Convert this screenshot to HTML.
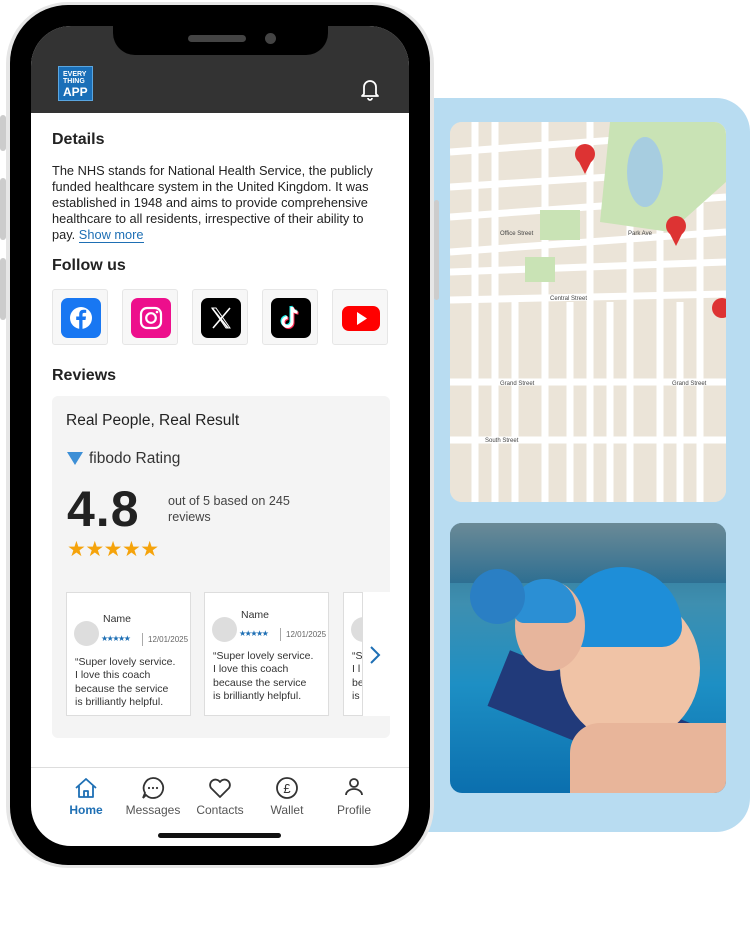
<!DOCTYPE html>
<html><head><meta charset="utf-8"><style>
*{margin:0;padding:0;box-sizing:border-box}
body{width:750px;height:938px;background:#fff;position:relative;overflow:hidden;font-family:"Liberation Sans",sans-serif;color:#222}
.abs{position:absolute}
.bluebg{left:420px;top:98px;width:330px;height:734px;background:#b8dcf1;border-radius:0 34px 34px 0}
.map{left:450px;top:122px;width:276px;height:380px;border-radius:12px;overflow:hidden;background:#ece6dc}
.photo{left:450px;top:523px;width:276px;height:270px;border-radius:12px;overflow:hidden;background:linear-gradient(180deg,#2f6d8c 0%,#3e8fb0 30%,#1d8fc4 60%,#0b6fae 100%)}
.phoneouter{left:6px;top:2px;width:428px;height:866px;border-radius:62px;background:#e6e6e6}
.phone{left:10px;top:5px;width:420px;height:860px;border-radius:58px;background:#000}
.screen{left:31px;top:26px;width:378px;height:820px;border-radius:40px;background:#fff;overflow:hidden}
.hdr{left:0;top:0;width:378px;height:87px;background:#333}
.notch{left:82px;top:0;width:215px;height:29px;background:#000;border-radius:0 0 22px 22px}
.btn{background:#ccc;border-radius:3px}
h3{font-size:16px;font-weight:bold;color:#222;position:absolute}
.p{left:21px;top:137px;width:350px;font-size:12.8px;line-height:16px;color:#222;white-space:nowrap}
.soc{top:263px;width:56px;height:56px;border:1px solid #e6e6e6;border-radius:3px;background:#f7f7f7}
.soc div{position:absolute;left:8px;top:8px;width:40px;height:40px;border-radius:7px}
.card{left:21px;top:370px;width:338px;height:342px;background:#f4f4f4;border-radius:6px}
.rv{top:196px;width:125px;height:124px;background:#fff;border:1px solid #ddd;font-size:10.5px;line-height:13.4px;color:#333}
.av{position:absolute;left:7px;top:28px;width:25px;height:25px;border-radius:50%;background:#ddd}
.nav{left:0;top:741px;width:378px;height:1px;background:#ddd}
.nl{font-size:12px;color:#555;text-align:center;width:70px;top:777px}
</style></head><body>
<div class="abs bluebg"></div>
<div class="abs map">
<svg width="276" height="380" viewBox="0 0 276 380">
<rect width="276" height="380" fill="#ebe4d8"/>
<g stroke="#fff" stroke-width="7" fill="none">
<path d="M0 30 L276 10"/><path d="M0 65 L160 55"/><path d="M0 95 L276 75"/><path d="M0 130 L276 110"/><path d="M0 150 L276 140"/><path d="M0 178 L276 172"/><path d="M0 260 L276 260"/><path d="M0 318 L276 318"/>
<path d="M45 0 V380"/><path d="M95 0 V380"/><path d="M140 0 V380"/><path d="M180 0 V380"/><path d="M210 0 V380"/><path d="M250 0 V380"/>
<path d="M25 0 V380"/><path d="M65 180 V380"/><path d="M120 180 V380"/><path d="M160 180 V380"/><path d="M230 180 V380"/>
</g>
<path d="M160 0 L276 0 L276 60 L220 110 L150 100 Z" fill="#c9e3b5"/>
<ellipse cx="195" cy="50" rx="18" ry="35" fill="#a7cde0"/>
<rect x="90" y="88" width="40" height="30" fill="#c9e3b5"/><rect x="75" y="135" width="30" height="25" fill="#c9e3b5"/>
<g font-size="6" fill="#444" font-family="Liberation Sans"><text x="100" y="178">Central Street</text><text x="50" y="263">Grand Street</text><text x="222" y="263">Grand Street</text><text x="35" y="320">South Street</text><text x="178" y="113">Park Ave</text><text x="50" y="113">Office Street</text></g>
<g fill="#d33"><circle cx="135" cy="32" r="10"/><path d="M127 36 L135 52 L143 36Z"/><circle cx="226" cy="104" r="10"/><path d="M218 108 L226 124 L234 108Z"/><circle cx="272" cy="186" r="10"/></g>
</svg></div>
<div class="abs photo">
<div class="abs" style="left:0;top:0;width:276px;height:60px;background:linear-gradient(#6b8a96,#2e6f92)"></div>
<div class="abs" style="left:40px;top:170px;width:240px;height:60px;background:#213a7a;transform:rotate(22deg)"></div>
<div class="abs" style="left:110px;top:70px;width:140px;height:150px;border-radius:50%;background:#f0c3a6"></div>
<div class="abs" style="left:112px;top:44px;width:120px;height:80px;border-radius:60px 60px 20px 20px;background:#1e8ed8"></div>
<div class="abs" style="left:65px;top:58px;width:70px;height:90px;border-radius:50%;background:#e7b59c"></div>
<div class="abs" style="left:64px;top:56px;width:62px;height:44px;border-radius:30px 30px 10px 10px;background:#2b8fd4"></div>
<div class="abs" style="left:20px;top:46px;width:55px;height:55px;border-radius:30px;background:#2a7fc4"></div>
<div class="abs" style="left:120px;top:200px;width:156px;height:70px;background:#e8b59a;border-radius:30px 0 0 0"></div>
</div>
<div class="abs btn" style="left:0;top:115px;width:6px;height:36px"></div>
<div class="abs btn" style="left:0;top:178px;width:6px;height:62px"></div>
<div class="abs btn" style="left:0;top:258px;width:6px;height:62px"></div>
<div class="abs btn" style="left:434px;top:200px;width:5px;height:100px"></div>
<div class="abs phoneouter"></div>
<div class="abs phone"></div>
<div class="abs screen">
<div class="abs hdr"></div>
<div class="abs notch"><div class="abs" style="left:75px;top:9px;width:58px;height:7px;border-radius:4px;background:#444"></div><div class="abs" style="left:152px;top:7px;width:11px;height:11px;border-radius:50%;background:#444"></div></div>
<div class="abs" style="left:27px;top:40px;width:35px;height:35px;background:#1a6fb8;border:1px solid #5aa6e0;color:#fff;font-weight:bold;font-size:7px;line-height:7px;padding:4px 0 0 4px">EVERY<br>THING<div style="font-size:12px;line-height:12px;margin-top:1px">APP</div></div>
<svg class="abs" style="left:329px;top:51px" width="20" height="24" viewBox="0 0 20 24"><path d="M4 17 V10 a6 6 0 0 1 12 0 V17 L18 19 H2 Z M8 21 a2 2 0 0 0 4 0" fill="none" stroke="#fff" stroke-width="1.8" stroke-linejoin="round"/></svg>
<h3 style="left:21px;top:105px">Details</h3>
<div class="abs p">The NHS stands for National Health Service, the publicly<br>funded healthcare system in the United Kingdom. It was<br>established in 1948 and aims to provide comprehensive<br>healthcare to all residents, irrespective of their ability to<br>pay. <span style="color:#1e6fb4;border-bottom:1px solid #1e6fb4">Show more</span></div>
<h3 style="left:21px;top:231px">Follow us</h3>
<div class="abs soc" style="left:21px"><div style="background:#1877f2"><svg width="40" height="40"><circle cx="20" cy="20" r="11" fill="#fff"/><path d="M21.5 31 V22 h3 l.5-3.5 h-3.5 v-2 c0-1 .4-1.6 1.7-1.6 h2 v-3 c-.5-.1-1.5-.2-2.7-.2 -2.6 0-4.3 1.6-4.3 4.5 v2.3 h-3 V22 h3 v9Z" fill="#1877f2"/></svg></div></div>
<div class="abs soc" style="left:91px"><div style="background:#ed0f8c"><svg width="40" height="40"><rect x="10" y="10" width="20" height="20" rx="6" fill="none" stroke="#fff" stroke-width="2.2"/><circle cx="20" cy="20" r="4.8" fill="none" stroke="#fff" stroke-width="2.2"/><circle cx="26" cy="14" r="1.3" fill="#fff"/></svg></div></div>
<div class="abs soc" style="left:161px"><div style="background:#000"><svg width="40" height="40"><path d="M11 10 L27 30 M29 10 L12 30" stroke="#fff" stroke-width="1.6"/><path d="M11 10 h4 l14 20 h-4z" fill="none" stroke="#fff" stroke-width="1"/></svg></div></div>
<div class="abs soc" style="left:231px"><div style="background:#000"><svg width="40" height="40"><path d="M21 9 v15 a4.5 4.5 0 1 1-4.5-4.5 M21 9 c.5 3 2.5 5 5.5 5.3" fill="none" stroke="#25f4ee" stroke-width="3" transform="translate(-1 -1)"/><path d="M21 9 v15 a4.5 4.5 0 1 1-4.5-4.5 M21 9 c.5 3 2.5 5 5.5 5.3" fill="none" stroke="#fe2c55" stroke-width="3" transform="translate(1 1)"/><path d="M21 9 v15 a4.5 4.5 0 1 1-4.5-4.5 M21 9 c.5 3 2.5 5 5.5 5.3" fill="none" stroke="#fff" stroke-width="3"/></svg></div></div>
<div class="abs soc" style="left:301px"><div style="background:transparent"><svg width="40" height="40"><rect x="1" y="8" width="38" height="25" rx="7" fill="#f00"/><path d="M16 14 L26 20.5 L16 27Z" fill="#fff"/></svg></div></div>
<h3 style="left:21px;top:341px">Reviews</h3>
<div class="abs card">
<div class="abs" style="left:14px;top:16px;font-size:15.5px;color:#222">Real People, Real Result</div>
<svg class="abs" style="left:15px;top:56px" width="16" height="13"><path d="M0 0 H16 L8 13Z" fill="#3d8fd6"/></svg>
<div class="abs" style="left:37px;top:54px;font-size:15.5px;color:#333">fibodo Rating</div>
<div class="abs" style="left:15px;top:84px;font-size:50px;font-weight:bold;color:#222;letter-spacing:1px">4.8</div>
<div class="abs" style="left:116px;top:97px;width:140px;font-size:12.6px;line-height:16px;color:#444">out of 5 based on 245 reviews</div>
<div class="abs" style="left:15px;top:141px;font-size:21px;color:#f5a30b;letter-spacing:-0.5px">★★★★★</div>
<div class="abs rv" style="left:14px;top:196px"><div class="av" style="top:28px"></div><div class="abs" style="left:36px;top:20px">Name</div><div class="abs" style="left:34px;top:39px;font-size:8px;color:#1e6fb4;letter-spacing:-1.5px">★★★★★</div><div class="abs" style="left:75px;top:40px;font-size:8px;color:#666;border-left:1px solid #aaa;padding-left:5px">12/01/2025</div><div class="abs" style="left:8px;top:63px">“Super lovely service.<br>I love this coach<br>because the service<br>is brilliantly helpful.</div></div>
<div class="abs rv" style="left:152px;top:196px"><div class="av" style="top:24px"></div><div class="abs" style="left:36px;top:16px">Name</div><div class="abs" style="left:34px;top:34px;font-size:8px;color:#1e6fb4;letter-spacing:-1.5px">★★★★★</div><div class="abs" style="left:75px;top:35px;font-size:8px;color:#666;border-left:1px solid #aaa;padding-left:5px">12/01/2025</div><div class="abs" style="left:8px;top:57px">“Super lovely service.<br>I love this coach<br>because the service<br>is brilliantly helpful.</div></div>
<div class="abs rv" style="left:291px;top:196px;width:20px;overflow:hidden"><div class="av" style="top:24px"></div><div class="abs" style="left:8px;top:57px">“S<br>I l<br>be<br>is</div></div>
<div class="abs" style="left:311px;top:196px;width:30px;height:124px;background:#fff"></div>
<svg class="abs" style="left:316px;top:249px" width="14" height="20"><path d="M3 2 L11 10 L3 18" fill="none" stroke="#1e6fb4" stroke-width="2"/></svg>
</div>
<div class="abs nav"></div>
<svg class="abs" style="left:43px;top:751px" width="24" height="22"><path d="M2 11 L12 2 L22 11 M5 9 V20 H19 V9 M10 20 V14 H14 V20" fill="none" stroke="#1e6fb4" stroke-width="1.8" stroke-linejoin="round"/></svg>
<svg class="abs" style="left:110px;top:750px" width="24" height="24"><path d="M12 2 a10 10 0 1 1-7 17 L2 22 L4 17 A10 10 0 0 1 12 2Z" fill="none" stroke="#333" stroke-width="1.8"/><circle cx="8" cy="12" r="1.1" fill="#333"/><circle cx="12" cy="12" r="1.1" fill="#333"/><circle cx="16" cy="12" r="1.1" fill="#333"/></svg>
<svg class="abs" style="left:177px;top:751px" width="24" height="22"><path d="M12 20 L3 11 a5 5 0 0 1 9-6 a5 5 0 0 1 9 6Z" fill="none" stroke="#333" stroke-width="1.8" stroke-linejoin="round"/></svg>
<svg class="abs" style="left:244px;top:750px" width="24" height="24"><circle cx="12" cy="12" r="10" fill="none" stroke="#333" stroke-width="1.8"/><text x="12" y="17" font-size="13" text-anchor="middle" font-family="Liberation Sans" fill="#333">£</text></svg>
<svg class="abs" style="left:312px;top:751px" width="22" height="22"><circle cx="11" cy="6" r="4" fill="none" stroke="#333" stroke-width="1.8"/><path d="M3 18 a8 6 0 0 1 16 0" fill="none" stroke="#333" stroke-width="1.8"/></svg>
<div class="abs nl" style="left:20px;color:#1e6fb4;font-weight:bold">Home</div>
<div class="abs nl" style="left:87px">Messages</div>
<div class="abs nl" style="left:154px">Contacts</div>
<div class="abs nl" style="left:221px">Wallet</div>
<div class="abs nl" style="left:288px">Profile</div>
<div class="abs" style="left:127px;top:807px;width:123px;height:5px;border-radius:3px;background:#111"></div>
</div>
</body></html>
